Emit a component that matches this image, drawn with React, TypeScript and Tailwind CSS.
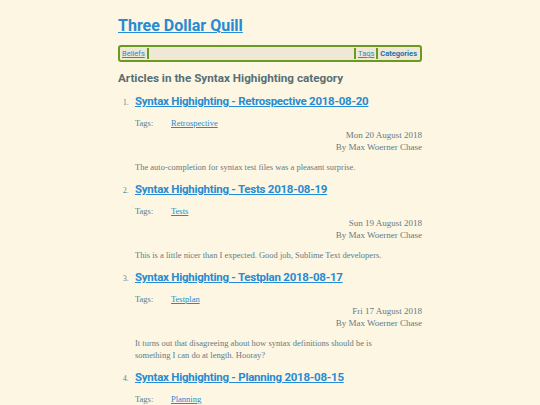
const posts = [
  {
    n: 1,
    title: "Syntax Highighting - Retrospective 2018-08-20",
    tag: "Retrospective",
    date: "Mon 20 August 2018",
    summary: "The auto-completion for syntax test files was a pleasant surprise.",
  },
  {
    n: 2,
    title: "Syntax Highighting - Tests 2018-08-19",
    tag: "Tests",
    date: "Sun 19 August 2018",
    summary: "This is a little nicer than I expected. Good job, Sublime Text developers.",
  },
  {
    n: 3,
    title: "Syntax Highighting - Testplan 2018-08-17",
    tag: "Testplan",
    date: "Fri 17 August 2018",
    summary:
      "It turns out that disagreeing about how syntax definitions should be is something I can do at length. Hooray?",
  },
  {
    n: 4,
    title: "Syntax Highighting - Planning 2018-08-15",
    tag: "Planning",
    date: "Wed 15 August 2018",
    summary: "Getting started on the plan.",
  },
];

const head = { fontFamily: 'Roboto, "Liberation Sans", sans-serif' };
const body = { fontFamily: '"Liberation Serif", "DejaVu Serif", serif' };

export default function App() {
  return (
    <div className="h-[405px] w-full overflow-hidden bg-[#fdf6e3] text-[#657b83]">
      <div className="mx-auto w-[304px] pt-[13px]">
        {/* HEADER */}
        <h1 style={head} className="text-[16px] font-bold leading-[26px]">
          <a href="#" className="text-[#268bd2] underline">Three Dollar Quill</a>
        </h1>

        {/* NAV */}
        <nav
          style={head}
          className="mt-[6px] flex h-[17px] items-center rounded-[3px] border-2 border-[#6b9a22] bg-[#eee8d5] px-[1px] text-[7.5px] leading-[11px]"
        >
          <a href="#" className="border-r-2 border-[#6b9a22] pl-[1px] pr-[2px] text-[#268bd2] underline">Beliefs</a>
          <div className="flex-1" />
          <a href="#" className="border-x-2 border-[#6b9a22] px-[2px] text-[#268bd2] underline">Tags</a>
          <a href="#" className="pl-[2px] pr-[2px] font-bold text-[#1f6fb0]">Categories</a>
        </nav>

        {/* CATEGORY */}
        <h2 style={head} className="mt-[7px] text-[11.7px] font-bold leading-[18px] text-[#586e75]">
          Articles in the Syntax Highighting category
        </h2>

        <ol className="mt-[5px] pl-[17px]">
          {posts.map((p) => (
            <li key={p.n} className="mb-[7px]">
              <div className="flex items-baseline">
                <span style={body} className="-ml-[12px] w-[12px] text-[7.5px] text-[#657b83]">{p.n}.</span>
                <h3 style={head} className="text-[11.5px] font-bold leading-[18px] tracking-[-0.25px]">
                  <a href="#" className="text-[#268bd2] underline">{p.title}</a>
                </h3>
              </div>
              <div style={body} className="text-[8.5px] leading-[12px]">
                <div className="mt-[7px] flex">
                  <span className="w-[36px] text-[#657b83]">Tags:</span>
                  <a href="#" className="text-[#268bd2] underline">{p.tag}</a>
                </div>
                <div className="text-right text-[9px]">{p.date}</div>
                <div className="text-right text-[9px]">By Max Woerner Chase</div>
                <p className="mt-[8px] pr-[40px]">{p.summary}</p>
              </div>
            </li>
          ))}
        </ol>
      </div>
    </div>
  );
}
